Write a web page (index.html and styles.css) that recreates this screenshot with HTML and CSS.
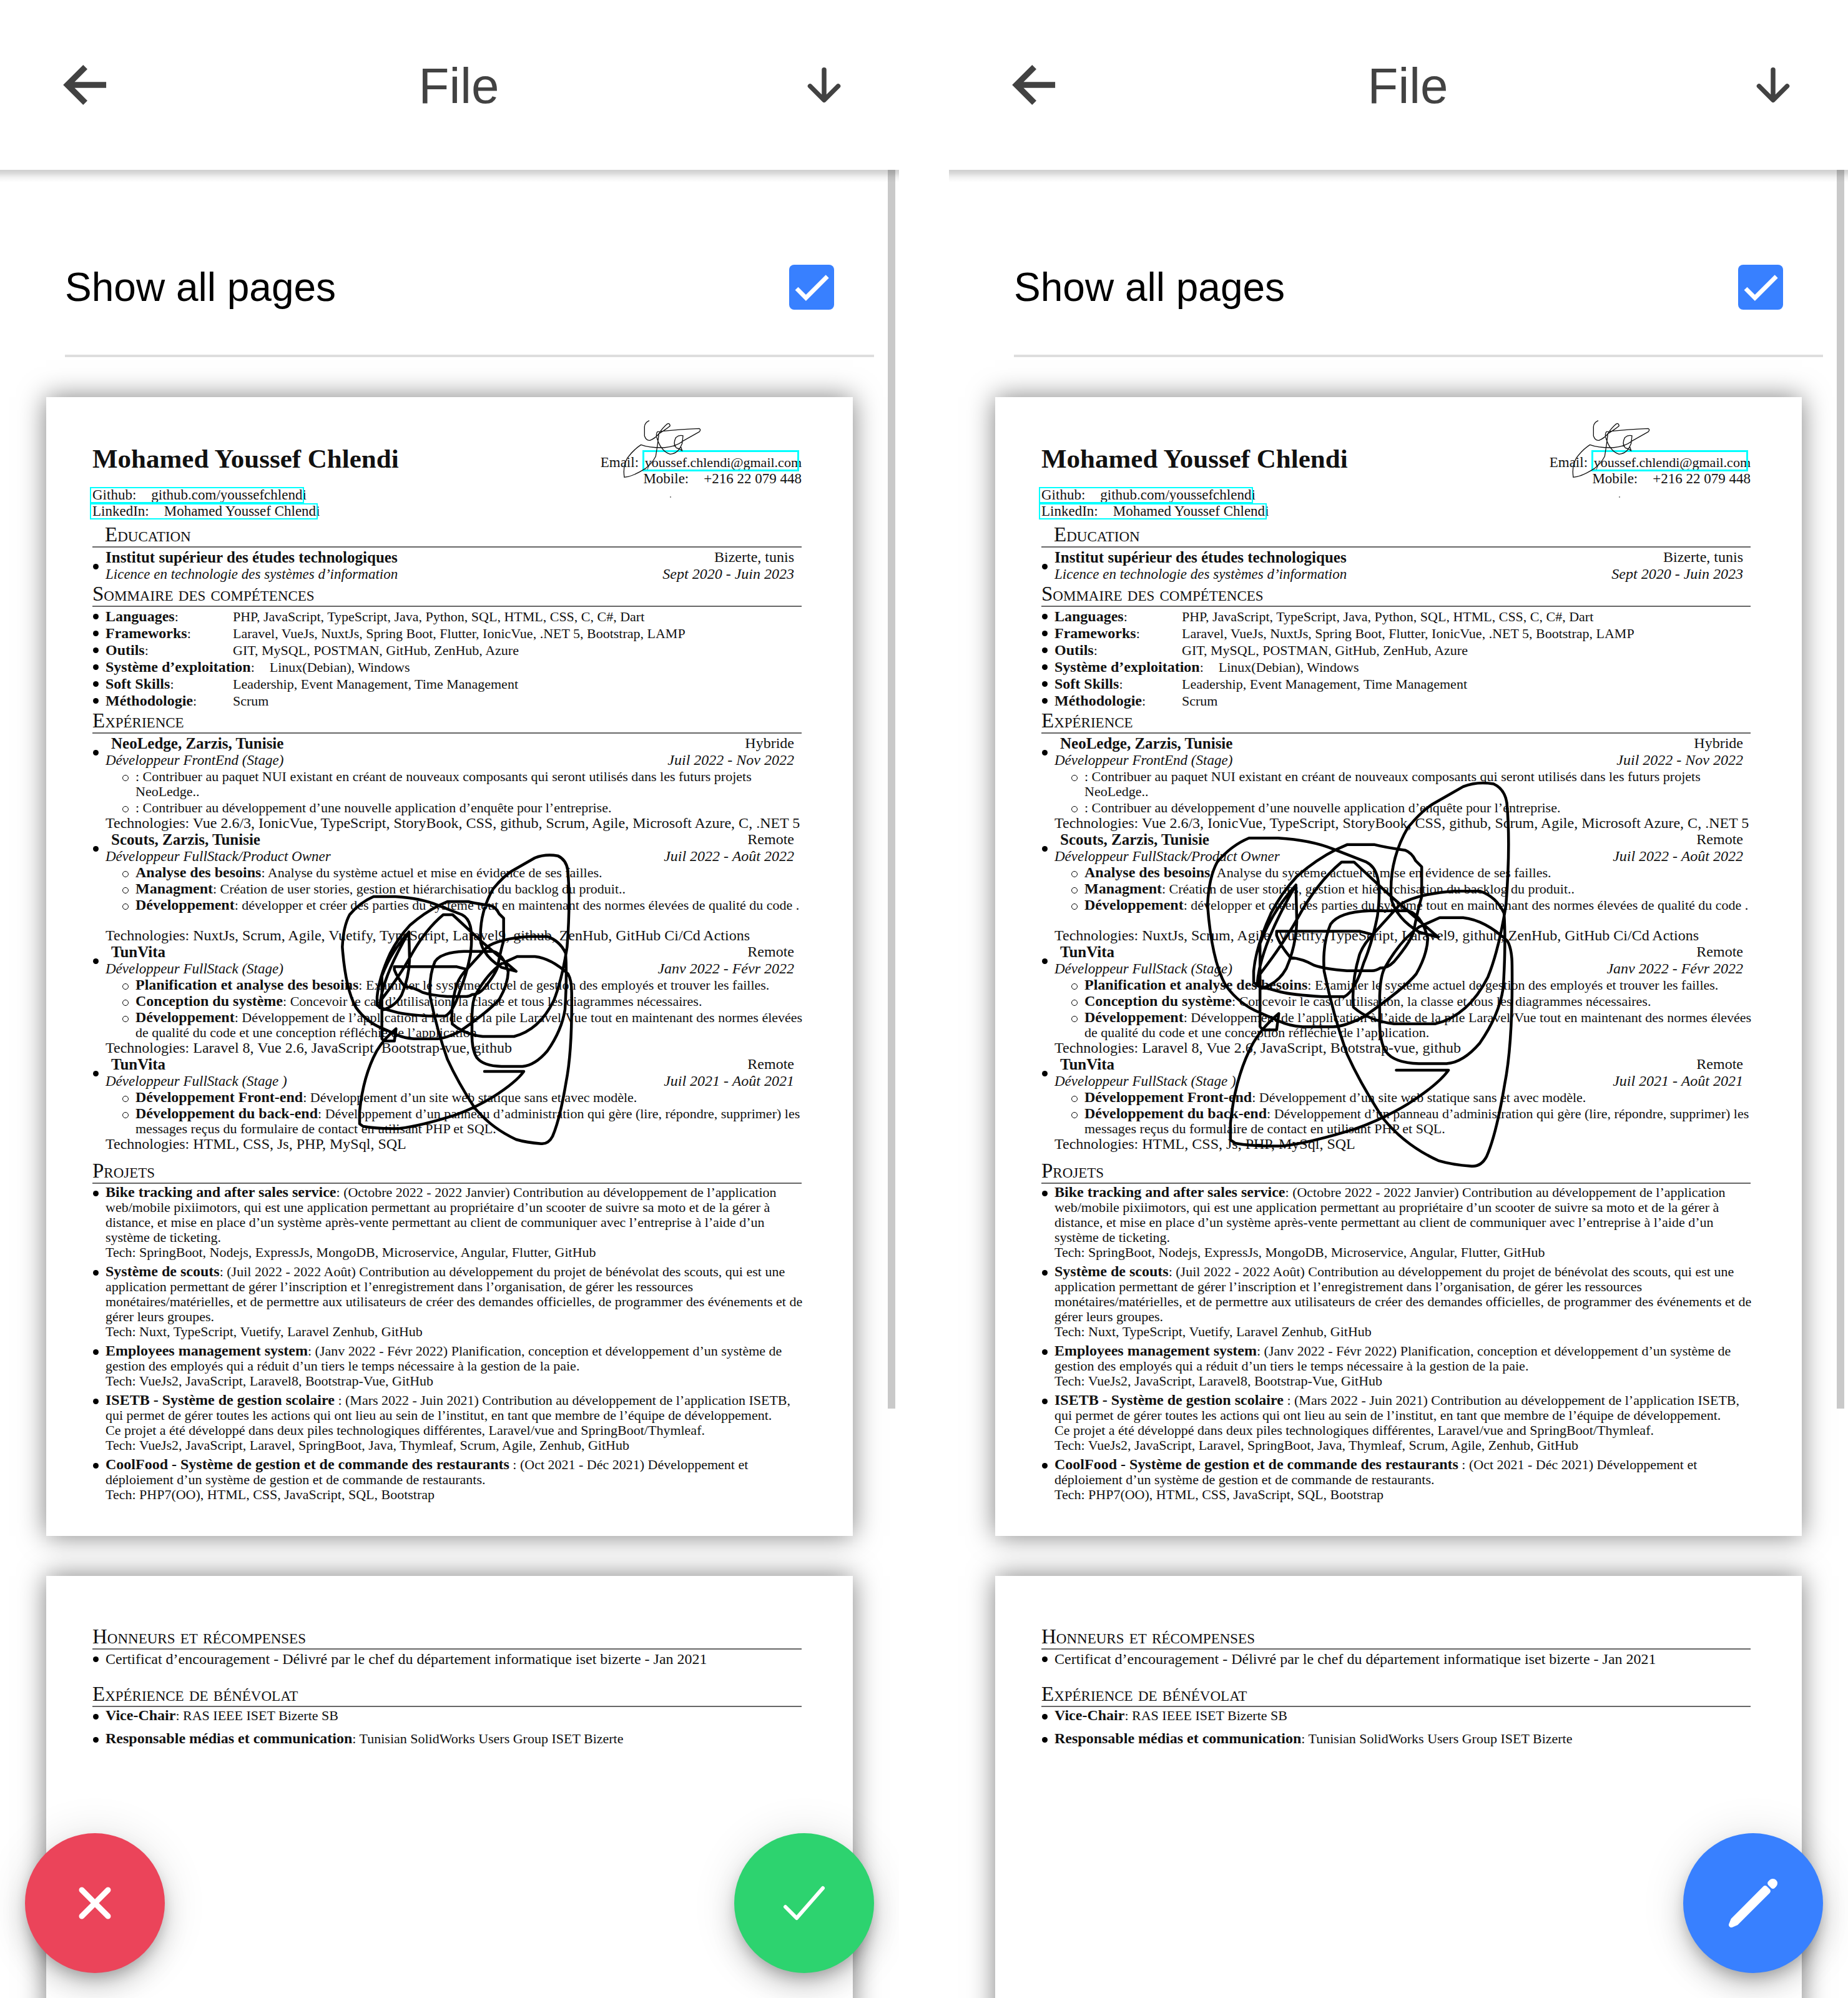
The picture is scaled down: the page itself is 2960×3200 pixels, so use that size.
FILE: index.html
```html
<!DOCTYPE html>
<html lang="fr">
<head>
<meta charset="utf-8">
<title>File</title>
<link rel="stylesheet" href="styles.css">
</head>
<body>

<svg class="defs" aria-hidden="true">
  <symbol id="arrow-back" viewBox="0 0 512 512"><path d="M244 400 100 256l144-144M120 256h292" fill="none" stroke="currentColor" stroke-width="48" stroke-miterlimit="10"/></symbol>
  <symbol id="arrow-down" viewBox="0 0 512 512"><path d="M112 268l144 144 144-144M256 392V100" fill="none" stroke="currentColor" stroke-width="48" stroke-linecap="round" stroke-linejoin="round"/></symbol>
  <symbol id="close" viewBox="0 0 512 512"><path d="M289.94 256l95-95A24 24 0 00351 127l-95 95-95-95a24 24 0 00-34 34l95 95-95 95a24 24 0 1034 34l95-95 95 95a24 24 0 0034-34z" fill="currentColor"/></symbol>
  <symbol id="check" viewBox="0 0 512 512"><path d="M416 128L192 384l-96-96" fill="none" stroke="currentColor" stroke-width="32" stroke-linecap="round" stroke-linejoin="round"/></symbol>
  <symbol id="pencil" viewBox="0 0 512 512"><path d="M358.62 129.28L86.49 402.08 70 442l39.92-16.49 272.8-272.13zM413.07 74.84l-11.79 11.78 24.1 24.1 11.79-11.79a16.51 16.51 0 000-23.35l-.75-.74a16.51 16.51 0 00-23.35 0z" fill="currentColor" stroke="currentColor" stroke-width="44" stroke-linejoin="round"/></symbol>
  <symbol id="small-signature" viewBox="0 0 720 450"><path d="M300 41Q275 52 277 75V115Q285 138 303 136Q330 125 345 105Q390 76 400 66Q397 50 385 58Q360 80 346 104Q340 160 331 212Q315 245 280 272Q220 310 180 313Q172 260 195 220Q225 180 260 157Q300 172 370 171Q430 165 460 140L540 95Q550 84 540 79Q450 82 340 94Q328 105 340 135Q360 190 400 202Q440 200 458 150L462 114Q445 108 428 122Q412 152 430 172L445 177L458 186L452 168M400 408h4" fill="none" stroke="#111" stroke-width="4" stroke-linejoin="round"/></symbol>
  <symbol id="signature" viewBox="0 0 1170 1500"><path vector-effect="non-scaling-stroke" d="M708 1098H897Q860 1150 750 1220Q660 1275 560 1310Q400 1360 300 1372Q200 1375 125 1362L108 1350V1290Q125 1120 190 1000Q225 940 283 893L275 952H225L215 940V640Q260 520 345 428L348 560Q345 650 310 730Q280 785 220 802L192 780V740Q200 650 255 530Q290 460 350 395Q420 335 490 300L530 282H630Q670 292 740 302Q765 312 778 340L800 362V470Q785 520 770 600Q755 640 700 705Q675 730 650 728Q635 738 620 738H530Q450 732 410 718Q370 695 325 690Q290 650 275 610V595H575L625 608M860 617L790 598Q710 550 690 480Q680 340 750 220Q800 160 840 135L950 72Q1000 52 1060 62Q1100 80 1108 130Q1122 280 1105 500Q1080 660 1040 760Q970 900 850 930H700Q610 920 553 870Q545 780 575 680Q590 640 625 605L720 500Q780 460 920 450H1010Q1070 470 1098 530Q1105 640 1095 800Q1080 900 1010 1000Q950 1070 890 1074H790Q700 1072 670 1030Q645 990 648 900V830Q650 760 665 730Q720 630 790 580L865 546H950Q1030 555 1110 630Q1127 660 1127 720Q1130 1000 1100 1150Q1070 1330 1035 1410Q1015 1448 980 1445Q910 1440 860 1425Q740 1370 660 1272Q580 1150 530 1040Q480 900 447 740Q440 640 470 570Q500 525 610 521H750Q800 535 822 620Q820 680 780 750Q740 800 590 905Q520 940 480 941H370Q320 938 283 920L215 890Q140 860 90 790Q40 700 25 500Q30 400 60 345Q110 285 175 258H280Q400 265 480 298L600 345Q630 360 640 400Q652 450 640 540Q620 640 590 710Q560 810 520 832H440Q330 825 290 815L205 792L215 750Q300 640 350 550Q420 420 510 345H555L690 470ZM205 785Q215 650 345 428" fill="none" stroke="#000" stroke-width="4.5" stroke-linejoin="round" stroke-linecap="round"/></symbol>
</svg>

<main class="screens">
  <section class="screen">
    <header class="toolbar">
      <button class="tool" type="button" aria-label="Back"><svg class="icon-back"><use href="#arrow-back"/></svg></button>
      <h1 class="title">File</h1>
      <button class="tool" type="button" aria-label="Download"><svg class="icon-down"><use href="#arrow-down"/></svg></button>
    </header>
    <label class="option">Show all pages <input class="checkbox" type="checkbox" checked></label>
    <div class="pages"><svg class="signature"><use href="#signature"/></svg></div>
    <div class="scrollbar"></div>
    <button class="fab fab-cancel" type="button" aria-label="Cancel"><svg><use href="#close"/></svg></button>
    <button class="fab fab-confirm" type="button" aria-label="Confirm"><svg><use href="#check"/></svg></button>
  </section>

  <section class="screen">
    <header class="toolbar">
      <button class="tool" type="button" aria-label="Back"><svg class="icon-back"><use href="#arrow-back"/></svg></button>
      <h1 class="title">File</h1>
      <button class="tool" type="button" aria-label="Download"><svg class="icon-down"><use href="#arrow-down"/></svg></button>
    </header>
    <label class="option">Show all pages <input class="checkbox" type="checkbox" checked></label>
    <div class="pages"><svg class="signature signature-large"><use href="#signature"/></svg></div>
    <div class="scrollbar"></div>
    <button class="fab fab-edit" type="button" aria-label="Edit"><svg><use href="#pencil"/></svg></button>
  </section>
</main>

<template id="document">
  <article class="page">
    <header class="identity">
      <div>
        <h2 class="name">Mohamed Youssef Chlendi</h2>
        <p class="contact"><a class="boxed" href="#github"><span class="key">Github:</span>github.com/youssefchlendi</a></p>
        <p class="contact"><a class="boxed" href="#linkedin"><span class="key">LinkedIn:</span>Mohamed Youssef Chlendi</a></p>
      </div>
      <div class="reach">
        <p>Email: <a class="boxed boxed-mail" href="#mail">youssef.chlendi@gmail.com</a></p>
        <p><span class="key">Mobile:</span>+216 22 079 448</p>
      </div>
    </header>

    <h3 class="heading heading-indent">Education</h3>
    <div class="entry">
      <div class="entry-head">
        <b class="org">Institut supérieur des études technologiques</b><span>Bizerte, tunis</span>
        <i>Licence en technologie des systèmes d’information</i><i>Sept 2020 - Juin 2023</i>
      </div>
    </div>

    <h3 class="heading">Sommaire des compétences</h3>
    <ul class="skills">
      <li><span class="skill"><b>Languages</b>:</span>PHP, JavaScript, TypeScript, Java, Python, SQL, HTML, CSS, C, C#, Dart</li>
      <li><span class="skill"><b>Frameworks</b>:</span>Laravel, VueJs, NuxtJs, Spring Boot, Flutter, IonicVue, .NET 5, Bootstrap, LAMP</li>
      <li><span class="skill"><b>Outils</b>:</span>GIT, MySQL, POSTMAN, GitHub, ZenHub, Azure</li>
      <li><span class="skill"><b>Système d’exploitation</b>:</span>Linux(Debian), Windows</li>
      <li><span class="skill"><b>Soft Skills</b>:</span>Leadership, Event Management, Time Management</li>
      <li><span class="skill"><b>Méthodologie</b>:</span>Scrum</li>
    </ul>

    <h3 class="heading">Expérience</h3>
    <div class="entry">
      <div class="entry-head">
        <b class="org org-indent">NeoLedge, Zarzis, Tunisie</b><span>Hybride</span>
        <i>Développeur FrontEnd (Stage)</i><i>Juil 2022 - Nov 2022</i>
      </div>
      <ul class="tasks">
        <li>: Contribuer au paquet NUI existant en créant de nouveaux composants qui seront utilisés dans les futurs projets<br>NeoLedge..</li>
        <li>: Contribuer au développement d’une nouvelle application d’enquête pour l’entreprise.</li>
      </ul>
      <p class="stack">Technologies: Vue 2.6/3, IonicVue, TypeScript, StoryBook, CSS, github, Scrum, Agile, Microsoft Azure, C, .NET 5</p>
    </div>
    <div class="entry">
      <div class="entry-head">
        <b class="org org-indent">Scouts, Zarzis, Tunisie</b><span>Remote</span>
        <i>Développeur FullStack/Product Owner</i><i>Juil 2022 - Août 2022</i>
      </div>
      <ul class="tasks tasks-open">
        <li><b>Analyse des besoins</b>: Analyse du système actuel et mise en évidence de ses failles.</li>
        <li><b>Managment</b>: Création de user stories, gestion et hiérarchisation du backlog du produit..</li>
        <li><b>Développement</b>: développer et créer des parties du système tout en maintenant des normes élevées de qualité du code .</li>
      </ul>
      <p class="stack">Technologies: NuxtJs, Scrum, Agile, Vuetify, TypeScript, Laravel9, github, ZenHub, GitHub Ci/Cd Actions</p>
    </div>
    <div class="entry">
      <div class="entry-head">
        <b class="org org-indent">TunVita</b><span>Remote</span>
        <i>Développeur FullStack (Stage)</i><i>Janv 2022 - Févr 2022</i>
      </div>
      <ul class="tasks">
        <li><b>Planification et analyse des besoins</b>: Examiner le système actuel de gestion des employés et trouver les failles.</li>
        <li><b>Conception du système</b>: Concevoir le cas d’utilisation, la classe et tous les diagrammes nécessaires.</li>
        <li><b>Développement</b>: Développement de l’application à l’aide de la pile Laravel/Vue tout en maintenant des normes élevées<br>de qualité du code et une conception réfléchie de l’application.</li>
      </ul>
      <p class="stack">Technologies: Laravel 8, Vue 2.6, JavaScript, Bootstrap-vue, github</p>
    </div>
    <div class="entry">
      <div class="entry-head">
        <b class="org org-indent">TunVita</b><span>Remote</span>
        <i>Développeur FullStack (Stage )</i><i>Juil 2021 - Août 2021</i>
      </div>
      <ul class="tasks">
        <li><b>Développement Front-end</b>: Développement d’un site web statique sans et avec modèle.</li>
        <li><b>Développement du back-end</b>: Développement d’un panneau d’administration qui gère (lire, répondre, supprimer) les<br>messages reçus du formulaire de contact en utilisant PHP et SQL.</li>
      </ul>
      <p class="stack">Technologies: HTML, CSS, Js, PHP, MySql, SQL</p>
    </div>

    <h3 class="heading heading-spaced">Projets</h3>
    <ul class="projects">
      <li><b>Bike tracking and after sales service</b>: (Octobre 2022 - 2022 Janvier) Contribution au développement de l’application<br>web/mobile pixiimotors, qui est une application permettant au propriétaire d’un scooter de suivre sa moto et de la gérer à<br>distance, et mise en place d’un système après-vente permettant au client de communiquer avec l’entreprise à l’aide d’un<br>système de ticketing.<br>Tech: SpringBoot, Nodejs, ExpressJs, MongoDB, Microservice, Angular, Flutter, GitHub</li>
      <li><b>Système de scouts</b>: (Juil 2022 - 2022 Août) Contribution au développement du projet de bénévolat des scouts, qui est une<br>application permettant de gérer l’inscription et l’enregistrement dans l’organisation, de gérer les ressources<br>monétaires/matérielles, et de permettre aux utilisateurs de créer des demandes officielles, de programmer des événements et de<br>gérer leurs groupes.<br>Tech: Nuxt, TypeScript, Vuetify, Laravel Zenhub, GitHub</li>
      <li><b>Employees management system</b>: (Janv 2022 - Févr 2022) Planification, conception et développement d’un système de<br>gestion des employés qui a réduit d’un tiers le temps nécessaire à la gestion de la paie.<br>Tech: VueJs2, JavaScript, Laravel8, Bootstrap-Vue, GitHub</li>
      <li><b>ISETB - Système de gestion scolaire</b> : (Mars 2022 - Juin 2021) Contribution au développement de l’application ISETB,<br>qui permet de gérer toutes les actions qui ont lieu au sein de l’institut, en tant que membre de l’équipe de développement.<br>Ce projet a été développé dans deux piles technologiques différentes, Laravel/vue and SpringBoot/Thymleaf.<br>Tech: VueJs2, JavaScript, Laravel, SpringBoot, Java, Thymleaf, Scrum, Agile, Zenhub, GitHub</li>
      <li><b>CoolFood - Système de gestion et de commande des restaurants</b> : (Oct 2021 - Déc 2021) Développement et<br>déploiement d’un système de gestion et de commande de restaurants.<br>Tech: PHP7(OO), HTML, CSS, JavaScript, SQL, Bootstrap</li>
    </ul>
    <svg class="small-signature"><use href="#small-signature"/></svg>
  </article>

  <article class="page page-next">
    <h3 class="heading">Honneurs et récompenses</h3>
    <ul class="awards">
      <li>Certificat d’encouragement - Délivré par le chef du département informatique iset bizerte - Jan 2021</li>
    </ul>
    <h3 class="heading heading-far">Expérience de bénévolat</h3>
    <ul class="projects roles">
      <li><b>Vice-Chair</b>: RAS IEEE ISET Bizerte SB</li>
      <li><b>Responsable médias et communication</b>: Tunisian SolidWorks Users Group ISET Bizerte</li>
    </ul>
  </article>
</template>

<script src="viewer.js"></script>
</body>
</html>
```
FILE: styles.css
```css
* { box-sizing: border-box; }

body {
  margin: 0;
  background: #fff;
  font-family: "Liberation Sans", Arial, sans-serif;
  color: #000;
}

h1, h2, h3, p, ul { margin: 0; padding: 0; font-weight: normal; }
ul { list-style: none; }
button { border: 0; padding: 0; background: none; color: inherit; display: grid; place-items: center; }
a { color: inherit; text-decoration: none; }
.defs { position: absolute; width: 0; height: 0; }

.screens { display: grid; grid-template-columns: 1fr 1fr; gap: 80px; height: 100vh; }
.screen { position: relative; overflow: hidden; min-width: 0; }

/* Toolbar */
.toolbar { position: relative; z-index: 2; display: flex; align-items: center; height: 272px; padding: 0 80px 0 88px; background: #fff; color: #424242; }
.toolbar::after { content: ""; position: absolute; left: 0; right: 0; top: 100%; height: 20px; background: linear-gradient(rgba(0,0,0,.19), rgba(0,0,0,.15) 25%, rgba(0,0,0,.05) 60%, transparent); }
.title { flex: 1; padding-top: 4px; text-align: center; font-size: 80px; line-height: 96px; }
.icon-back { display: block; width: 102px; height: 102px; }
.icon-down { display: block; width: 80px; height: 80px; }

.option { display: flex; align-items: center; justify-content: space-between; height: 220px; margin: 80px 40px 64px 104px; padding-right: 64px; border-bottom: 4px solid #dedede; font-size: 64px; }
.checkbox { appearance: none; width: 72px; height: 72px; margin: 0; border-radius: 8px; background: #3880ff url("data:image/svg+xml,%3Csvg xmlns='http://www.w3.org/2000/svg' viewBox='0 0 24 24'%3E%3Cpath d='M1.73 12.91l6.37 6.37L22.79 4.59' fill='none' stroke='%23fff' stroke-width='3'/%3E%3C/svg%3E") center / 56px no-repeat; }

.scrollbar { position: absolute; z-index: 1; top: 272px; right: 6px; width: 12px; height: 62vh; background: #c9c9c9; }

/* Floating buttons */
.fab { position: absolute; z-index: 3; bottom: 40px; width: 224px; height: 224px; border-radius: 50%; color: #fff; box-shadow: 0 12px 20px -4px rgba(0,0,0,.2), 0 24px 40px rgba(0,0,0,.14), 0 4px 72px rgba(0,0,0,.12); }
.fab svg { width: 96px; height: 96px; }
.fab-cancel { left: 40px; background: #eb445a; }
.fab-confirm { right: 40px; background: #2dd36f; }
.fab-edit { right: 40px; background: #3880ff; }

/* Document */
.pages { position: relative; display: grid; grid-template-columns: minmax(0, 1fr); gap: 64px; padding: 0 74px; font-family: "Liberation Serif", "Times New Roman", serif; font-size: 22px; line-height: 24px; color: #111; white-space: nowrap; }
.page { position: relative; aspect-ratio: 17 / 24; padding: 74px 82px 0 74px; background: #fff; box-shadow: 0 0 40px rgba(0,0,0,.5); }
.page-next { padding-top: 79px; }
.pages li b { font-size: 24px; line-height: 0; }

.identity { display: flex; justify-content: space-between; margin-bottom: 6px; line-height: 26px; }
.name { font-size: 43px; line-height: 50px; font-weight: bold; margin-bottom: 20px; }
.contact { font-size: 23px; }
.key { margin-right: 24px; }
.reach { padding-top: 18px; text-align: right; font-size: 23px; }
.boxed { position: relative; display: inline-block; }
.boxed::before { content: ""; position: absolute; inset: 0 4px 0 -4px; border: 2px solid #0ff; }
.boxed-mail { margin-left: 4px; font-size: 22px; }
.boxed-mail::before { inset: -7px 4px -1px -4px; border-width: 3px; }

.heading { height: 39px; margin-bottom: 2px; border-bottom: 2px solid #666; font-size: 33px; line-height: 36px; font-variant: small-caps; }
.heading-indent { padding-left: 20px; }
.heading-spaced { margin-top: 12px; }
.heading-far { margin-top: 25px; }

.entry { padding-left: 21px; }
.entry-head { position: relative; display: grid; grid-template-columns: 1fr auto; padding-right: 12px; font-size: 24px; line-height: 27px; }
.entry-head i { font-size: 23px; }
.entry-head > :nth-child(2n) { text-align: right; font-size: 24px; }
.entry-head .org { font-size: 25px; }
.org-indent { padding-left: 9px; }
.entry-head::before, .skills li::before, .projects li::before, .awards li::before { content: ""; position: absolute; left: -20px; top: 9px; width: 9px; height: 9px; border-radius: 50%; background: #000; }
.entry-head::before { top: 24px; }

.skills, .projects, .awards { padding-left: 21px; }
.skills li, .projects li, .awards li, .tasks li { position: relative; }
.skills li { display: flex; line-height: 27px; }
.skill { min-width: 180px; margin-right: 24px; }

.tasks { display: grid; gap: 2px; padding: 1px 0 0 48px; }
.tasks-open { padding-bottom: 24px; }
.tasks li::before { content: ""; position: absolute; left: -21px; top: 9px; width: 8px; height: 8px; border: 1px solid #000; border-radius: 50%; }
.stack { font-size: 24px; line-height: 25px; }

.projects { display: grid; gap: 7px; }
.roles { gap: 13px; }
.awards { font-size: 24px; line-height: 26px; }

/* Hand-drawn signatures lying over the first page */
.small-signature { position: absolute; right: 186px; top: 24px; width: 240px; height: 150px; }
.signature { position: absolute; z-index: 1; left: 540px; top: 714px; width: 390px; height: 500px; overflow: visible; }
.signature-large { left: 403px; top: 592px; width: 518px; height: 664px; }
```
FILE: viewer.js
```js
// Both screens show the same document, so it is written once and cloned.
const source = document.getElementById("document");
for (const pages of document.querySelectorAll(".pages")) {
  pages.prepend(source.content.cloneNode(true));
}
```
